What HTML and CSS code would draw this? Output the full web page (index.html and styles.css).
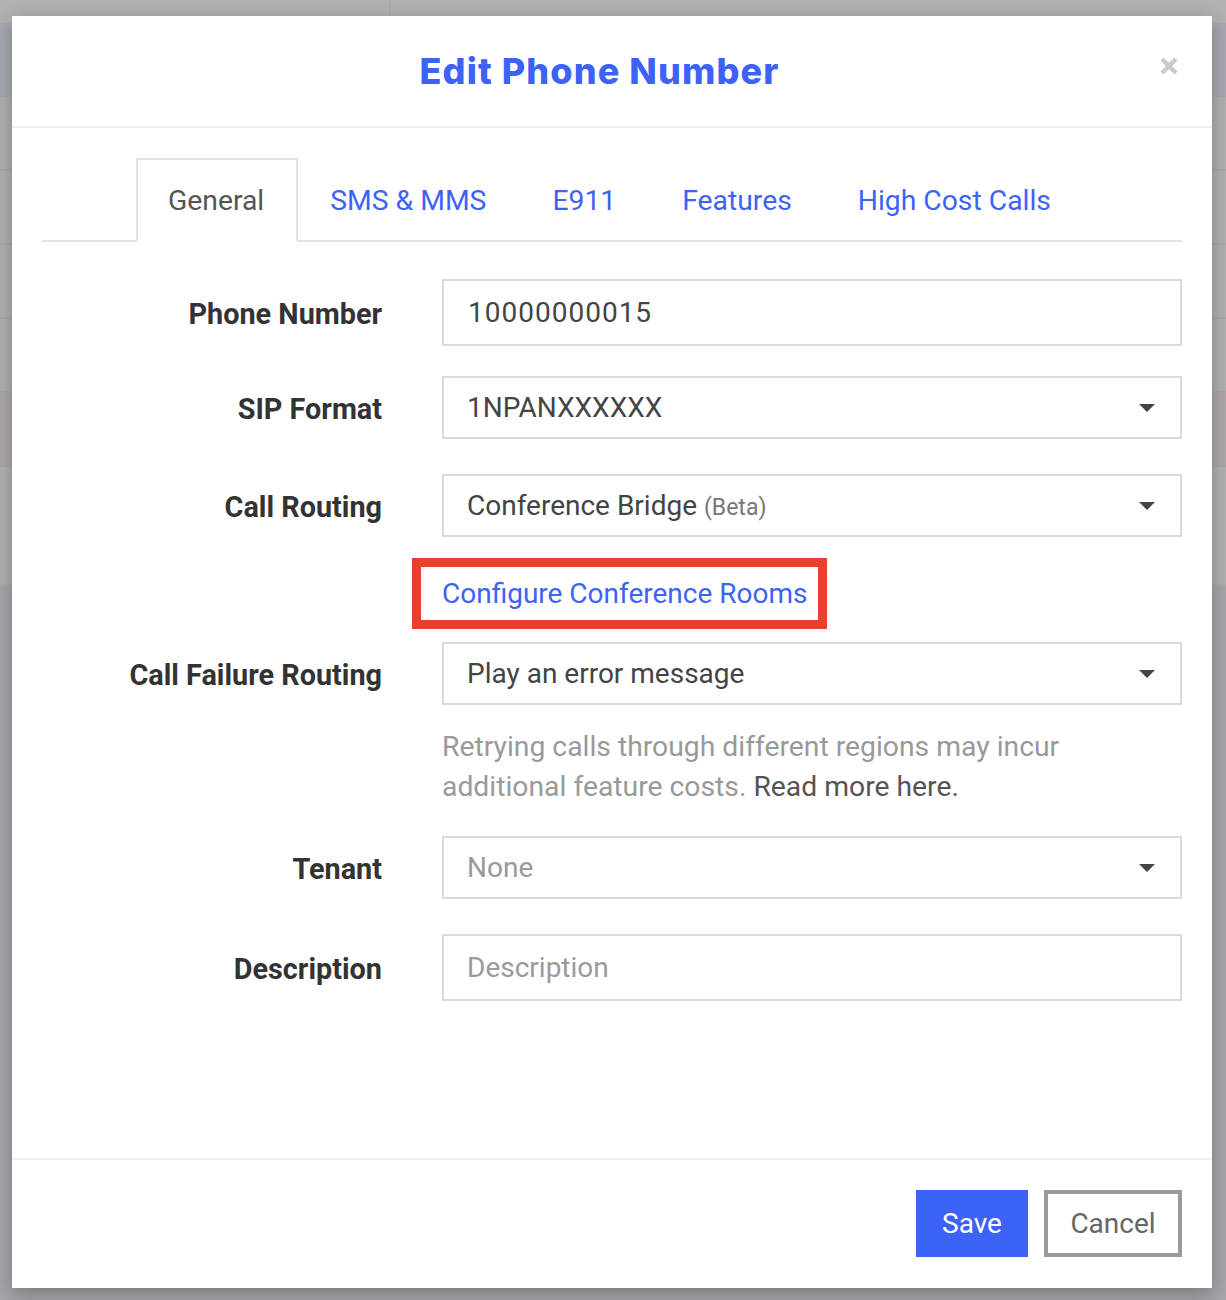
FILE: index.html
```html
<!DOCTYPE html>
<html lang="en">
<head>
    <meta charset="UTF-8">
    <meta name="viewport" content="width=device-width, initial-scale=1.0">
    <title>Edit Phone Number</title>
    <link rel="stylesheet" href="styles.css">
</head>
<body>
    <!-- page behind the dimmed overlay -->
    <div class="page">
        <div class="page-top"><div class="page-top-cell"></div></div>
        <div class="page-row tint-blue"></div>
        <div class="page-row"></div>
        <div class="page-row"></div>
        <div class="page-row"></div>
        <div class="page-row"></div>
        <div class="page-row tint-red"></div>
        <div class="page-row tall"></div>
        <div class="page-row tint-slate fill"></div>
    </div>

    <div class="modal">
        <div class="modal-header">
            <h1 class="modal-title">Edit Phone Number</h1>
            <button class="modal-close" aria-label="Close">
                <svg width="20" height="20" viewBox="0 0 20 20"><path d="M3 3 L17 17 M17 3 L3 17" stroke="#cacaca" stroke-width="4.5" fill="none"/></svg>
            </button>
        </div>

        <div class="modal-body">
            <ul class="tabs">
                <li class="tab active">General</li>
                <li class="tab">SMS &amp; MMS</li>
                <li class="tab">E911</li>
                <li class="tab">Features</li>
                <li class="tab">High Cost Calls</li>
            </ul>

            <div class="form">
                <div class="form-row row-phone">
                    <label class="form-label">Phone Number</label>
                    <div class="form-input tall digits">10000000015</div>
                </div>
                <div class="form-row row-sip">
                    <label class="form-label">SIP Format</label>
                    <div class="select-box">
                        <span>1NPANXXXXXX</span>
                        <span class="caret"></span>
                    </div>
                </div>
                <div class="form-row row-routing">
                    <label class="form-label">Call Routing</label>
                    <div class="select-box">
                        <span>Conference Bridge <small class="muted">(Beta)</small></span>
                        <span class="caret"></span>
                    </div>
                </div>
                <div class="form-row row-link">
                    <span></span>
                    <div><a class="highlight-link" href="#">Configure Conference Rooms</a></div>
                </div>
                <div class="form-row row-failure">
                    <label class="form-label">Call Failure Routing</label>
                    <div class="select-box">
                        <span>Play an error message</span>
                        <span class="caret"></span>
                    </div>
                </div>
                <div class="form-row row-help">
                    <span></span>
                    <p class="help-text">Retrying calls through different regions may incur additional feature costs. <a href="#">Read more here.</a></p>
                </div>
                <div class="form-row row-tenant">
                    <label class="form-label">Tenant</label>
                    <div class="select-box">
                        <span class="placeholder">None</span>
                        <span class="caret"></span>
                    </div>
                </div>
                <div class="form-row row-desc">
                    <label class="form-label">Description</label>
                    <div class="form-input tall placeholder">Description</div>
                </div>
            </div>
        </div>

        <div class="modal-footer">
            <button class="btn btn-primary">Save</button>
            <button class="btn btn-default">Cancel</button>
        </div>
    </div>
</body>
</html>
```

FILE: styles.css
```css
body {
    margin: 0;
    font-family: Roboto, "Liberation Sans", sans-serif;
    background-color: #b0b0b0;
    height: 1300px;
    overflow: hidden;
}

/* dimmed page */
.page {
    display: flex;
    flex-direction: column;
    height: 1300px;
}
.page-top {
    height: 23px;
    display: flex;
    background-color: #b1b1b1;
}
.page-top-cell {
    width: 389px;
    border-right: 2px solid #a9a9a9;
}
.page-row {
    height: 72px;
    border-bottom: 2px solid #a9a9a9;
    background-color: #b0b0b0;
}
.page-row.tall { height: 117px; }
.page-row.tint-blue { background-color: #a7a9b1; }
.page-row.tint-red { background-color: #afa8a8; }
.page-row.tint-slate { background-color: #a5a6ab; }
.page-row.fill { flex-grow: 1; border-bottom: none; }

/* modal */
.modal {
    position: absolute;
    top: 16px;
    left: 12px;
    width: 1200px;
    height: 1272px;
    background-color: #fff;
    box-shadow: 0 6px 18px rgba(0,0,0,0.28);
    display: flex;
    flex-direction: column;
}
.modal-header {
    position: relative;
    height: 110px;
    border-bottom: 2px solid #f0f0f0;
    display: flex;
    justify-content: center;
    align-items: center;
    padding-right: 25px;
}
.modal-title {
    margin: 0;
    font-family: Inter, "Open Sans", sans-serif;
    font-weight: 800;
    font-size: 36px;
    letter-spacing: 1.1px;
    color: #3d63f6;
}
.modal-close {
    position: absolute;
    top: 40px;
    right: 33px;
    border: none;
    background: none;
    padding: 0;
    cursor: pointer;
}
.modal-body {
    flex-grow: 1;
    padding: 30px 30px 0;
}

/* tabs */
.tabs {
    list-style: none;
    margin: 0;
    padding: 0 0 0 94px;
    display: flex;
    border-bottom: 2px solid #e2e2e2;
}
.tab {
    height: 80px;
    padding: 0 32px 0 30px;
    margin-bottom: -2px;
    border: 2px solid transparent;
    display: flex;
    align-items: center;
    font-size: 28.3px;
    color: #3d63f6;
    cursor: pointer;
}
.tab.active {
    color: #555;
    border-color: #e2e2e2;
    border-bottom-color: #fff;
}

/* form */
.form {
    padding-top: 37px;
}
.form-row {
    display: grid;
    grid-template-columns: 340px 740px;
    column-gap: 60px;
    align-items: center;
}
.form-label {
    text-align: right;
    font-weight: 700;
    font-size: 28.8px;
    color: #333;
    padding-top: 2px;
}
.form-input,
.select-box {
    box-sizing: border-box;
    height: 63px;
    border: 2px solid #d8dbdf;
    padding: 0 23px;
    display: flex;
    align-items: center;
    font-size: 28px;
    color: #444;
}
.form-input.tall { height: 67px; }
.form-input.digits { letter-spacing: 1px; padding-left: 24px; }
.select-box { justify-content: space-between; padding-right: 25px; }
.caret {
    width: 0;
    height: 0;
    border-left: 8px solid transparent;
    border-right: 8px solid transparent;
    border-top: 8px solid #444;
}
.muted {
    font-size: 23px;
    color: #777;
}
.placeholder { color: #9a9a9a; }

.row-phone { margin-bottom: 30px; }
.row-sip { margin-bottom: 35px; }
.row-routing { margin-bottom: 21px; }
.row-link { margin-bottom: 13px; }
.row-failure { margin-bottom: 22px; }
.row-help { margin-bottom: 29px; }
.row-tenant { margin-bottom: 35px; }

.highlight-link {
    display: inline-block;
    margin-left: -30px;
    padding: 0 11px 0 21px;
    height: 53px;
    line-height: 53px;
    border: 9px solid #e8402a;
    font-size: 28px;
    color: #3d63f6;
    text-decoration: none;
}
.help-text {
    margin: 0;
    font-size: 28.3px;
    line-height: 40px;
    color: #999;
    padding-right: 100px;
}
.help-text a {
    color: #555;
    text-decoration: none;
}

/* footer */
.modal-footer {
    height: 130px;
    border-top: 2px solid #f0f0f0;
    display: flex;
    justify-content: flex-end;
    align-items: flex-start;
    padding: 30px 30px 0 0;
    box-sizing: border-box;
    gap: 16px;
}
.btn {
    height: 67px;
    font-family: Roboto, "Liberation Sans", sans-serif;
    font-size: 28px;
    padding: 0;
    cursor: pointer;
}
.btn-primary {
    width: 112px;
    background-color: #3d63f6;
    color: #fff;
    border: none;
}
.btn-default {
    width: 138px;
    background-color: #fff;
    color: #666;
    border: 4px solid #9a9a9a;
}
```
